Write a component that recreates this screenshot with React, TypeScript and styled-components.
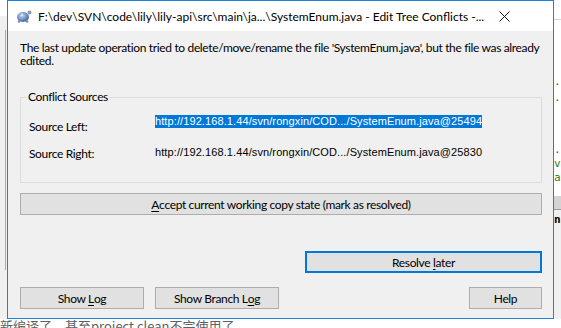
import React from 'react';
import styled, {createGlobalStyle} from 'styled-components';

const GlobalStyle = createGlobalStyle`
  html, body {
    margin: 0;
    padding: 0;
    background: #ffffff;
    overflow: hidden;
  }
  #root {
    width: 561px;
    height: 328px;
  }
`;

const UI_FONT = `'Segoe UI', Lato, 'Noto Sans', sans-serif`;

const Screen = styled.div`
  display: grid;
  grid-template-columns: 7px 547px 7px;
  grid-template-rows: 319px 9px;
  width: 561px;
  height: 328px;
  overflow: hidden;
  background: #ffffff;
`;

const LeftStrip = styled.div`
  display: flex;
  flex-direction: column;
  background: #f0f0f0;
`;

const LeftTop = styled.div`
  height: 16px;
  background: #ffffff;
`;

const LeftRule = styled.div`
  margin: 14px 0 0 5px;
  width: 1px;
  height: 240px;
  background: #a9a9a9;
`;

const RightStrip = styled.div`
  display: flex;
  flex-direction: column;
  background: #ffffff;
  font-family: 'DejaVu Sans Mono', monospace;
  font-size: 11px;
  color: #2a7a2a;
  overflow: hidden;
`;

const RightHeader = styled.div`
  height: 19px;
  border-bottom: 1px solid #d5d5d5;
`;

const CodeBit = styled.div<{$top: number}>`
  margin-top: ${p => p.$top}px;
  height: 12px;
  line-height: 12px;
  white-space: nowrap;
  overflow: hidden;
`;

const RightBand = styled.div`
  margin-top: 12px;
  height: 13px;
  background: #d4d4d4;
  border-bottom: 1px solid #9a9a9a;
`;

const RightBottom = styled.div`
  flex: 1;
  background: #f0f0f0;
  color: #000;
  font-weight: bold;
  padding-top: 3px;
  overflow: hidden;
`;

const FooterText = styled.div`
  grid-column: 1 / 4;
  font-family: 'Noto Sans CJK SC', sans-serif;
  font-size: 13px;
  line-height: 16px;
  color: #606060;
  white-space: nowrap;
  margin-top: -1px;
`;

const Dialog = styled.div`
  display: flex;
  flex-direction: column;
  border: 1px solid #1883d7;
  background: #f0f0f0;
  font-family: ${UI_FONT};
  font-size: 12px;
  letter-spacing: -0.35px;
  color: #000;
`;

const TitleBar = styled.div`
  display: flex;
  align-items: center;
  height: 30px;
  background: #ffffff;
  padding-left: 8px;
  letter-spacing: 0;
`;

const TitleText = styled.div`
  margin-left: 5px;
  flex: 1;
  white-space: nowrap;
  font-size: 12px;
`;

const CloseBox = styled.div`
  width: 54px;
  display: flex;
  align-items: center;
`;

const Body = styled.div`
  display: flex;
  flex-direction: column;
  flex: 1;
  padding: 10px 11px 0 12px;
`;

const Message = styled.p`
  margin: 0;
  line-height: 13px;
  white-space: nowrap;
`;

const GroupBox = styled.fieldset`
  margin: 23px 0 0 0;
  padding: 16px 8px 0 8px;
  height: 93px;
  box-sizing: border-box;
  border: 1px solid #dcdcdc;
  border-radius: 0;
`;

const Legend = styled.legend`
  margin-left: -3px;
  padding: 0 2px;
  line-height: 14px;
`;

const SourceGrid = styled.div`
  display: grid;
  grid-template-columns: 126px 1fr;
  row-gap: 14px;
  align-items: center;
`;

const SourceLabel = styled.div`
  line-height: 13px;
`;

const SourceValue = styled.div<{$selected?: boolean}>`
  font-family: 'Liberation Sans', Arial, sans-serif;
  font-size: 11px;
  letter-spacing: 0.1px;
  line-height: 13px;
  justify-self: start;
  ${p => (p.$selected ? 'background: #0078d7; color: #fff; margin-top: -10px;' : 'margin-top: -2px;')}
`;

const Button = styled.div<{$default?: boolean; $width?: number}>`
  display: flex;
  align-items: center;
  justify-content: center;
  box-sizing: border-box;
  height: 22px;
  ${p => (p.$width ? `width: ${p.$width}px;` : '')}
  background: #e1e1e1;
  border: ${p => (p.$default ? '2px solid #0078d7' : '1px solid #adadad')};
  white-space: nowrap;
`;

const Key = styled.span`
  text-decoration: underline;
  text-underline-offset: 2px;
`;

const AcceptRow = styled.div`
  margin-top: 10px;
`;

const ResolveRow = styled.div`
  display: flex;
  justify-content: flex-end;
  margin-top: 36px;
`;

const BottomRow = styled.div`
  display: flex;
  gap: 11px;
  margin-top: 14px;
`;

const Spacer = styled.div`
  flex: 1;
`;

function TortoiseIcon() {
  return (
    <svg width="17" height="16" viewBox="0 0 17 16">
      <defs>
        <radialGradient id="shell" cx="40%" cy="35%" r="70%">
          <stop offset="0%" stopColor="#c9d8f0" />
          <stop offset="60%" stopColor="#6f8fc4" />
          <stop offset="100%" stopColor="#3e5c93" />
        </radialGradient>
      </defs>
      <ellipse cx="7" cy="9" rx="6" ry="5" fill="url(#shell)" />
      <circle cx="13.5" cy="4.5" r="2" fill="#8a9bb8" />
      <circle cx="3" cy="13.5" r="1.3" fill="#7a8aa6" />
      <circle cx="11" cy="13.5" r="1.3" fill="#7a8aa6" />
      <circle cx="6" cy="7" r="1" fill="#e8eef8" />
    </svg>
  );
}

function CloseIcon() {
  return (
    <svg width="11" height="11" viewBox="0 0 11 11">
      <path d="M0.5 0.5 L10.5 10.5 M10.5 0.5 L0.5 10.5" stroke="#111" strokeWidth="1" fill="none" />
    </svg>
  );
}

function App() {
  return (
    <>
      <GlobalStyle />
      <Screen>
        <LeftStrip>
          <LeftTop />
          <LeftRule />
        </LeftStrip>
        <Dialog>
          <TitleBar>
            <TortoiseIcon />
            <TitleText>
              F:\dev\SVN\code\lily\lily-api\src\main\ja...\SystemEnum.java - Edit Tree Conflicts -...
            </TitleText>
            <CloseBox>
              <CloseIcon />
            </CloseBox>
          </TitleBar>
          <Body>
            <Message>
              The last update operation tried to delete/move/rename the file 'SystemEnum.java', but the file was already
              <br />
              edited.
            </Message>
            <GroupBox>
              <Legend>Conflict Sources</Legend>
              <SourceGrid>
                <SourceLabel>Source Left:</SourceLabel>
                <SourceValue $selected>http://192.168.1.44/svn/rongxin/COD.../SystemEnum.java@25494</SourceValue>
                <SourceLabel>Source Right:</SourceLabel>
                <SourceValue>http://192.168.1.44/svn/rongxin/COD.../SystemEnum.java@25830</SourceValue>
              </SourceGrid>
            </GroupBox>
            <AcceptRow>
              <Button>
                <Key>A</Key>ccept current working copy state (mark as resolved)
              </Button>
            </AcceptRow>
            <ResolveRow>
              <Button $default $width={237}>
                Resolve&nbsp;<Key>l</Key>ater
              </Button>
            </ResolveRow>
            <BottomRow>
              <Button $width={124}>
                Show&nbsp;<Key>L</Key>og
              </Button>
              <Button $width={124}>
                Show Branch L<Key>o</Key>g
              </Button>
              <Spacer />
              <Button $width={73}>Help</Button>
            </BottomRow>
          </Body>
        </Dialog>
        <RightStrip>
          <RightHeader />
          <CodeBit $top={56}>.j</CodeBit>
          <CodeBit $top={4}>.j</CodeBit>
          <CodeBit $top={40}>.j</CodeBit>
          <CodeBit $top={2}>va</CodeBit>
          <CodeBit $top={2}>a</CodeBit>
          <RightBand />
          <RightBottom>n</RightBottom>
        </RightStrip>
        <FooterText>新编译了，甚至project clean不完使用了</FooterText>
      </Screen>
    </>
  );
}

export default App;
